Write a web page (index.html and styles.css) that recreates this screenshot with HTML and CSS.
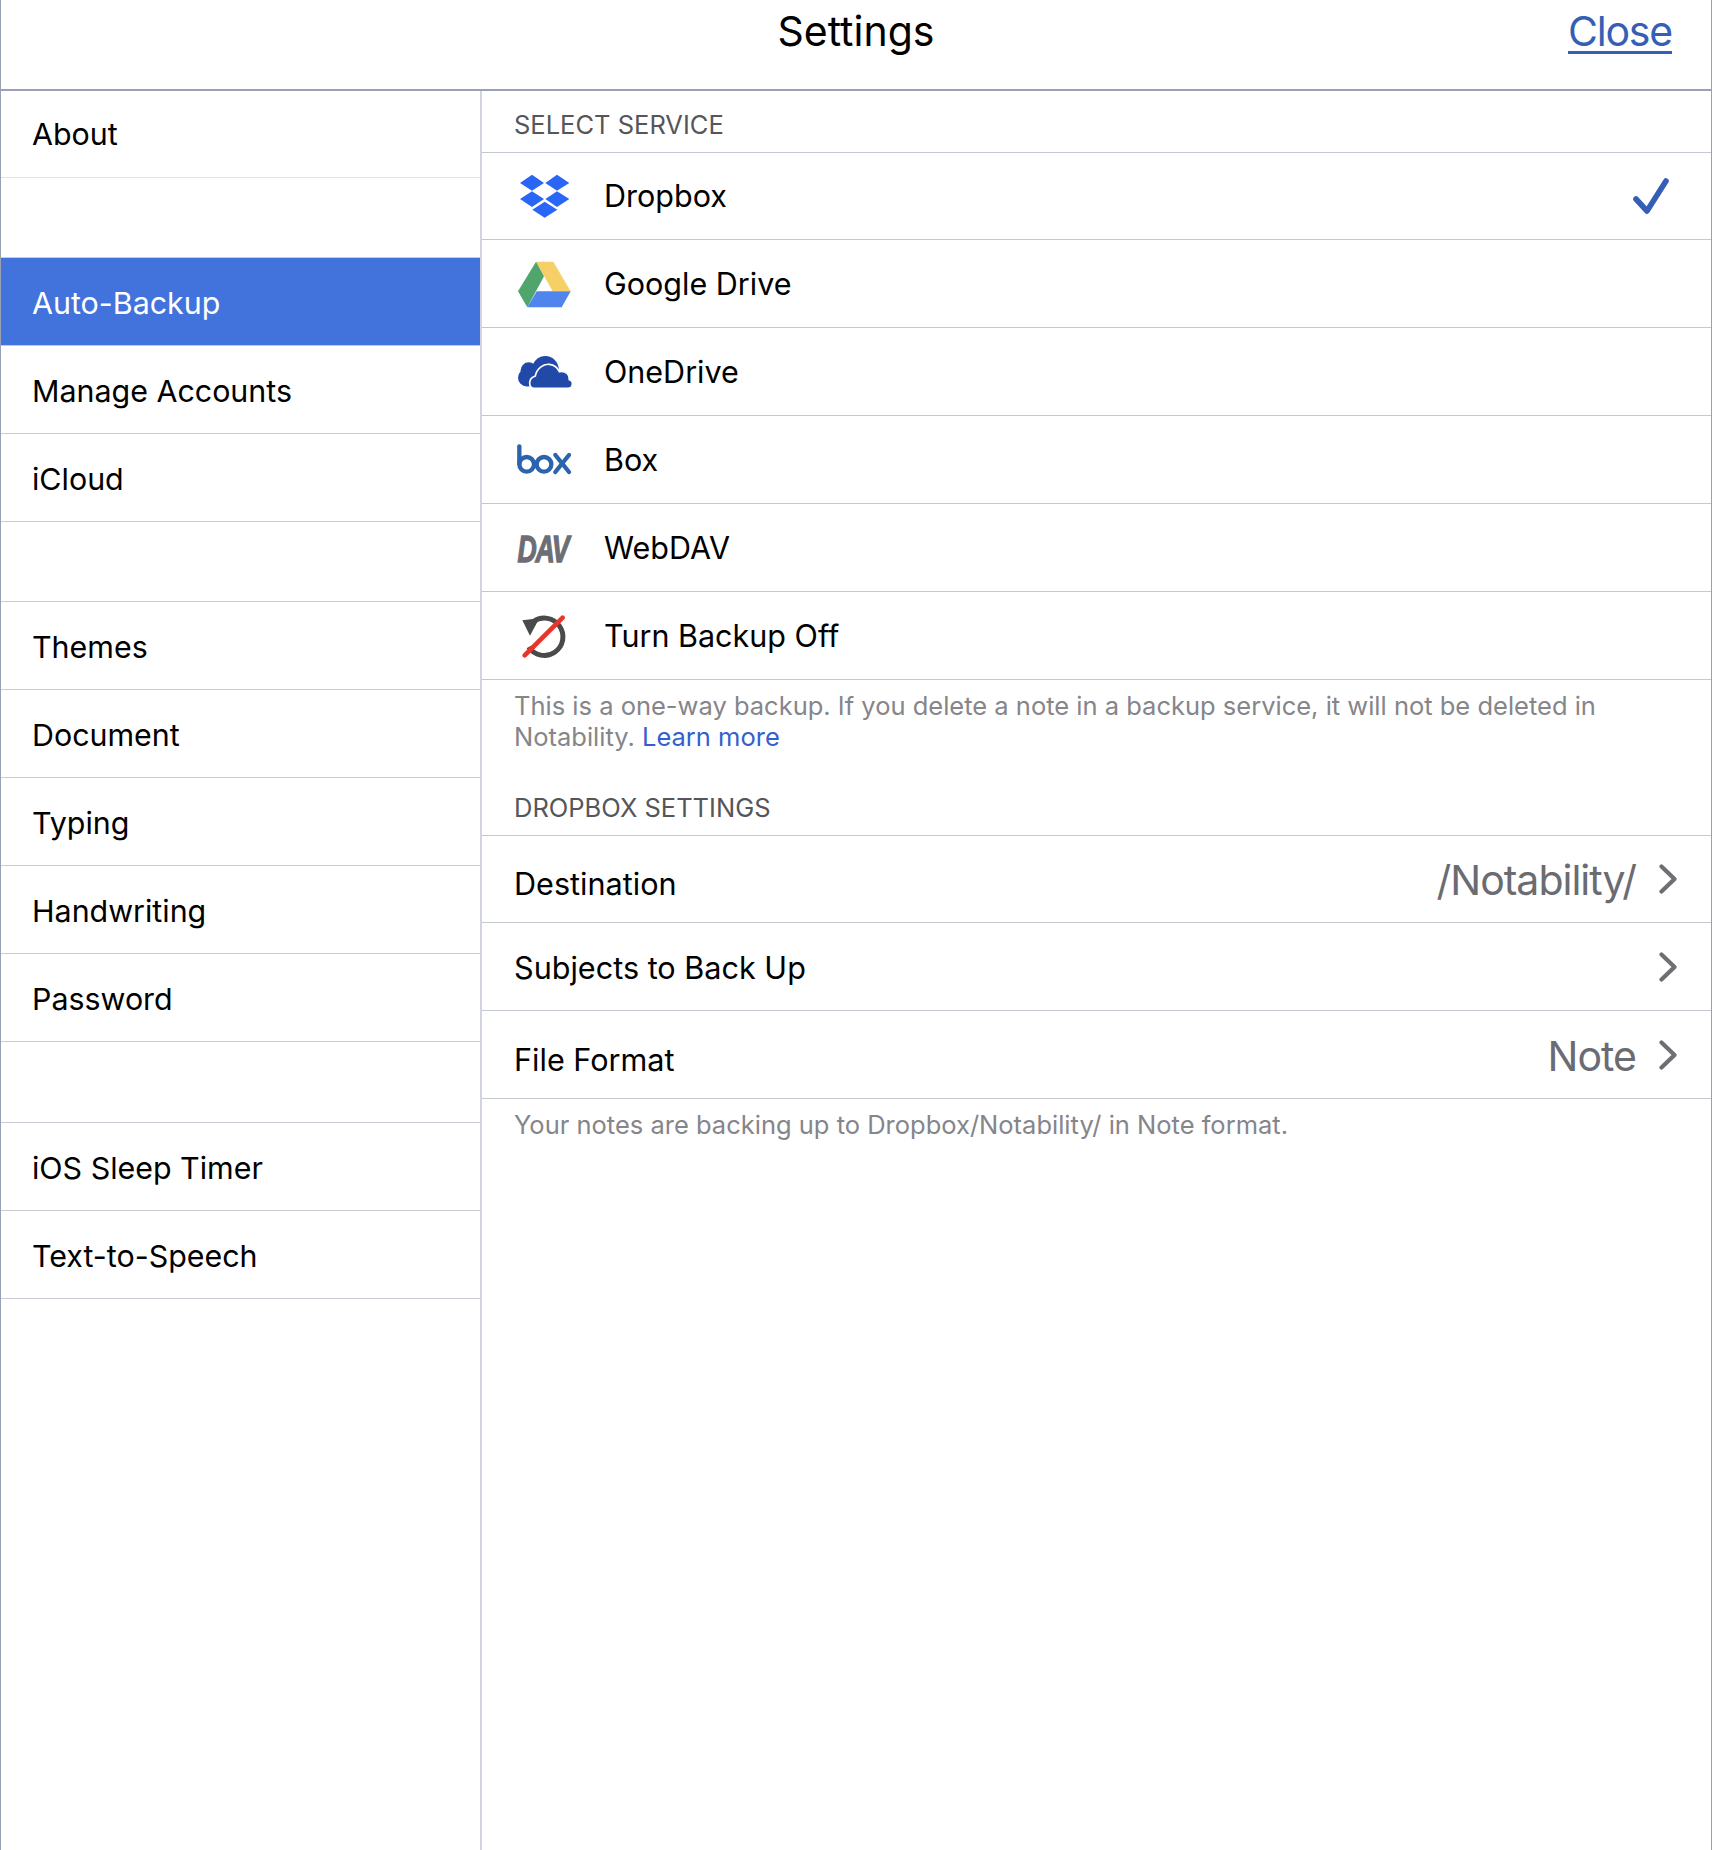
FILE: index.html
```html
<!DOCTYPE html>
<html lang="en">
<head>
<meta charset="utf-8">
<title>Settings</title>
<link rel="stylesheet" href="styles.css">
</head>
<body>
<div class="app">
  <header class="topbar">
    <h1 class="title">Settings</h1>
    <a class="close" href="#">Close</a>
  </header>
  <div class="main">
    <nav class="sidebar">
      <div class="group first">
        <div class="nav-row">About</div>
      </div>
      <div class="group">
        <div class="nav-row selected">Auto-Backup</div>
        <div class="nav-row">Manage Accounts</div>
        <div class="nav-row">iCloud</div>
      </div>
      <div class="group">
        <div class="nav-row">Themes</div>
        <div class="nav-row">Document</div>
        <div class="nav-row">Typing</div>
        <div class="nav-row">Handwriting</div>
        <div class="nav-row">Password</div>
      </div>
      <div class="group group-last">
        <div class="nav-row">iOS Sleep Timer</div>
        <div class="nav-row">Text-to-Speech</div>
      </div>
    </nav>
    <section class="content">
      <div class="section-head head-service">SELECT SERVICE</div>
      <div class="list">
        <div class="service">
          <svg class="icon" viewBox="105 14 180 180">
            <polygon fill="#2a66f6" points="156,43 192,68 156,91 120,68"/>
            <polygon fill="#2a66f6" points="231,43 268,68 231,91 196,68"/>
            <polygon fill="#2a66f6" points="156,93 192,116 156,140 120,116"/>
            <polygon fill="#2a66f6" points="231,93 268,116 231,140 196,116"/>
            <polygon fill="#2a66f6" points="194,124 232,148 194,172 157,148"/>
          </svg>
          <span class="service-name">Dropbox</span>
          <svg class="check" viewBox="0 -2 44 44">
            <path d="M5 24 L16 36 L35 6" fill="none" stroke="#345fb5" stroke-width="5.6" stroke-linecap="round" stroke-linejoin="round"/>
          </svg>
        </div>
        <div class="service">
          <svg class="icon" viewBox="105 283 180 180">
            <polygon fill="#f6cf66" points="168,306 220,306 272,395 218,395"/>
            <polygon fill="#4fa56c" points="168,306 192,350 142,443 114,395"/>
            <polygon fill="#5085ee" points="170,395 272,395 245,443 142,443"/>
          </svg>
          <span class="service-name">Google Drive</span>
        </div>
        <div class="service">
          <svg class="icon" viewBox="105 543 180 180">
            <g fill="#2149a8">
              <circle cx="140" cy="650" r="26"/>
              <circle cx="146" cy="628" r="24"/>
              <circle cx="196" cy="625" r="40"/>
              <rect x="136" y="620" width="100" height="56"/>
            </g>
            <path fill="#2149a8" stroke="#fff" stroke-width="5" d="M162 683 C145 680 143 652 166 645 C170 622 190 608 208 610 C224 612 234 622 238 632 C258 628 270 642 268 656 C282 660 280 683 262 683 Z"/>
            <rect x="150" y="680" width="126" height="6" fill="#fff"/>
          </svg>
          <span class="service-name">OneDrive</span>
        </div>
        <div class="service">
          <svg class="icon" viewBox="105 57 180 180">
            <g fill="none" stroke="#2b64ad" stroke-width="13" stroke-linecap="round">
              <line x1="118" y1="106" x2="118" y2="158"/>
              <circle cx="140" cy="160" r="22"/>
              <circle cx="192" cy="160" r="22"/>
              <line x1="226" y1="132" x2="267" y2="183"/>
              <line x1="267" y1="132" x2="226" y2="183"/>
            </g>
          </svg>
          <span class="service-name">Box</span>
        </div>
        <div class="service">
          <svg class="icon" viewBox="35 107 60 60">
            <text class="dav" x="52" y="150.7" transform="scale(0.72 1)">DAV</text>
          </svg>
          <span class="service-name">WebDAV</span>
        </div>
        <div class="service">
          <svg class="icon" viewBox="105 585 180 180">
            <path fill="none" stroke="#4a4a4c" stroke-width="15" d="M160 632 A56 56 0 1 1 146 708"/>
            <polygon fill="#4a4a4c" points="127,628 178,622 150,674"/>
            <line x1="134" y1="733" x2="248" y2="620" stroke="#e8352a" stroke-width="14" stroke-linecap="round"/>
          </svg>
          <span class="service-name">Turn Backup Off</span>
        </div>
      </div>
      <div class="note note-backup">
        <div>This is a one-way backup. If you delete a note in a backup service, it will not be deleted in</div>
        <div>Notability. <a class="learn" href="#">Learn more</a></div>
      </div>
      <div class="section-head head-settings">DROPBOX SETTINGS</div>
      <div class="list">
        <div class="setting setting-dest">
          <span class="setting-name">Destination</span>
          <span class="value">/Notability/</span>
          <svg class="chevron" viewBox="0 0 18 30"><path d="M2.5 2.5 L15.5 15 L2.5 27.5" fill="none" stroke="#6e6e74" stroke-width="4.2" stroke-linecap="round" stroke-linejoin="round"/></svg>
        </div>
        <div class="setting setting-subj">
          <span class="setting-name">Subjects to Back Up</span>
          <svg class="chevron" viewBox="0 0 18 30"><path d="M2.5 2.5 L15.5 15 L2.5 27.5" fill="none" stroke="#6e6e74" stroke-width="4.2" stroke-linecap="round" stroke-linejoin="round"/></svg>
        </div>
        <div class="setting setting-file">
          <span class="setting-name">File Format</span>
          <span class="value">Note</span>
          <svg class="chevron" viewBox="0 0 18 30"><path d="M2.5 2.5 L15.5 15 L2.5 27.5" fill="none" stroke="#6e6e74" stroke-width="4.2" stroke-linecap="round" stroke-linejoin="round"/></svg>
        </div>
      </div>
      <p class="note note-status">Your notes are backing up to Dropbox/Notability/ in Note format.</p>
    </section>
  </div>
</div>
</body>
</html>
```
FILE: styles.css
```css
* { box-sizing: border-box; }
html, body { margin: 0; padding: 0; background: #fff; }
body { font-family: Inter, "Liberation Sans", sans-serif; color: #000; }

.app {
  width: 1712px;
  height: 1850px;
  display: flex;
  flex-direction: column;
  border-left: 1px solid #9aa1b5;
  border-right: 1px solid #9aa1b5;
  overflow: hidden;
}

.topbar {
  height: 91px;
  flex: none;
  border-bottom: 2px solid #9aa1b5;
  display: flex;
  align-items: center;
  justify-content: center;
  position: relative;
  padding-bottom: 28px;
}
.title { margin: 0; font-size: 41px; font-weight: 400; line-height: 48px; }
.close {
  position: absolute;
  right: 39px;
  top: 7px;
  font-size: 41px;
  letter-spacing: -1.2px;
  line-height: 48px;
  color: #345fb5;
  text-decoration: underline;
  text-decoration-thickness: 3px;
  text-underline-offset: 5px;
}

.main { flex: 1; display: flex; min-height: 0; }

.sidebar {
  width: 481px;
  flex: none;
  border-right: 2px solid #d0d5df;
}
.group { margin-top: 79px; border-top: 1px solid #c9ccd4; }
.group.group-last { margin-top: 80px; }
.group.first { margin-top: 0; border-top: 0; }
.nav-row {
  height: 88px;
  padding-left: 31px;
  padding-top: 3px;
  display: flex;
  align-items: center;
  font-size: 30.4px;
  border-bottom: 1px solid #c9ccd4;
}
.first .nav-row { height: 87px; padding-top: 0; border-bottom-color: #e2e3e6; }
.nav-row.selected { background: #4272db; color: #fff; }

.content { flex: 1; min-width: 0; }

.section-head {
  padding-left: 32px;
  font-size: 25.5px;
  color: #55555a;
  display: flex;
  align-items: flex-end;
}
.head-service { height: 61px; padding-bottom: 12px; }
.head-settings { height: 43px; padding-bottom: 12px; }

.list { border-top: 1px solid #c5c8d0; }

.service {
  height: 88px;
  display: flex;
  align-items: center;
  border-bottom: 1px solid #c5c8d0;
  padding-left: 33px;
  padding-right: 36px;
  font-size: 30.5px;
}
.service:first-child { height: 87px; padding-bottom: 2px; }
.icon { width: 60px; height: 60px; flex: none; }
.service-name { margin-left: 29px; flex: 1; }
.check { width: 44px; height: 44px; flex: none; }
.dav {
  font-family: "Liberation Sans", sans-serif;
  font-weight: 700;
  font-style: italic;
  font-size: 37px;
  letter-spacing: -1.5px;
  fill: #6d6d75;
  stroke: #6d6d75;
  stroke-width: 1.3px;
}

.note {
  margin: 0;
  padding: 0 32px;
  font-size: 25.5px;
  line-height: 31px;
  color: #85858a;
}
.note-backup { padding-top: 10px; height: 112px; }
.note-status { padding-top: 10px; }
.learn { color: #345fd0; text-decoration: none; }

.setting {
  height: 88px;
  display: flex;
  align-items: center;
  border-bottom: 1px solid #c5c8d0;
  padding-left: 32px;
  padding-right: 34px;
  font-size: 30.6px;
}
.setting-name { flex: 1; position: relative; }
.setting-dest { height: 87px; }
.setting-dest .setting-name { top: 4px; }
.setting-file .setting-name { top: 5px; }
.setting-subj .setting-name { top: 1px; }
.value { font-size: 41px; letter-spacing: -1px; color: #6b6b72; margin-right: 23px; position: relative; top: 1px; }
.chevron { width: 18px; height: 30px; flex: none; }
```
